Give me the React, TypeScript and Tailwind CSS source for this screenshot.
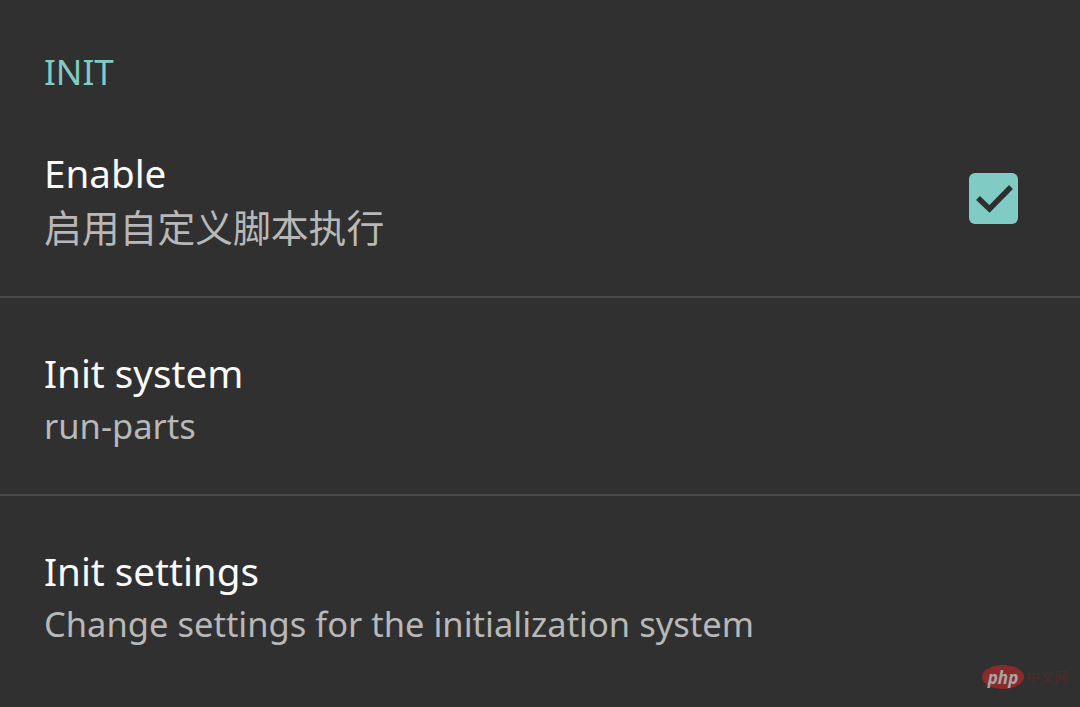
import React from 'react';

const font = { fontFamily: '"Noto Sans", "Noto Sans CJK SC", sans-serif' };

interface RowProps {
  title: string;
  summary: string;
  cjk?: boolean;
  checked?: boolean;
}

const CheckIcon = () => (
  <div className="w-[49px] h-[51px] rounded-[6px] bg-[#80cbc4]">
    <svg width="49" height="51" viewBox="0 0 49 51" fill="none">
      <path d="M9 25 L20.5 36 L42 14" stroke="#2f2f2f" strokeWidth="5.5" />
    </svg>
  </div>
);

const PrefRow: React.FC<RowProps> = ({ title, summary, cjk, checked }) => (
  <div className="flex items-center h-[196px] pl-[44px] pr-[62px]">
    <div className="flex-1 flex flex-col pt-[8px]">
      <span className="text-[38.6px] leading-[52px] text-[#fafafa]">{title}</span>
      <span
        className={
          cjk
            ? 'text-[37.8px] leading-[58px] text-[#b8b8b8]'
            : 'text-[34.5px] leading-[54px] text-[#b8b8b8]'
        }
      >
        {summary}
      </span>
    </div>
    {checked !== undefined && <CheckIcon />}
  </div>
);

export default function App() {
  return (
    <div className="relative w-[1080px] h-[707px] bg-[#303030] overflow-hidden" style={font}>
      <div className="pl-[44px] pt-[49px] h-[100px] text-[35px] leading-[46px] text-[#80cbc4]">
        INIT
      </div>
      <PrefRow title="Enable" summary="启用自定义脚本执行" cjk checked />
      <div className="h-[2px] bg-[#4a4a4a]" />
      <PrefRow title="Init system" summary="run-parts" />
      <div className="h-[2px] bg-[#4a4a4a]" />
      <PrefRow title="Init settings" summary="Change settings for the initialization system" />
      <div className="absolute right-[12px] bottom-[18px] flex items-center gap-[2px] opacity-70">
        <div className="w-[42px] h-[24px] rounded-[50%] bg-[#b02a2a] flex items-center justify-center">
          <span className="text-[17px] leading-none italic font-bold text-[#d8d8d8]">php</span>
        </div>
        <span className="text-[14px] leading-none text-[#5a2a2a]">中文网</span>
      </div>
    </div>
  );
}
